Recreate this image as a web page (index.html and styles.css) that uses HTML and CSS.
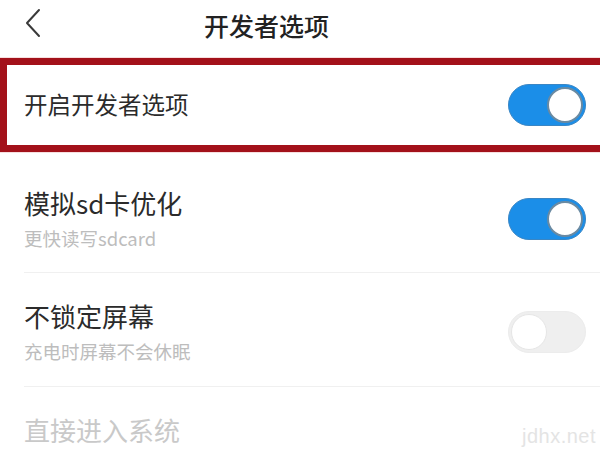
FILE: index.html
```html
<!DOCTYPE html>
<html lang="zh">
<head>
<meta charset="utf-8">
<title>开发者选项</title>
<link rel="stylesheet" href="styles.css">
</head>
<body>
<div class="screen">
  <header class="topbar">
    <svg class="back" width="18" height="30" viewBox="0 0 18 30"><polyline points="15,2 3,15 15,28" fill="none" stroke="#3a3a3a" stroke-width="2" stroke-linecap="round" stroke-linejoin="round"/></svg>
    <h1 class="title">开发者选项</h1>
  </header>

  <div class="highlight">
    <div class="row-main">
      <span class="main-label">开启开发者选项</span>
      <span class="switch on"><span class="knob"></span></span>
    </div>
  </div>

  <div class="item first">
    <div class="texts">
      <div class="label">模拟sd卡优化</div>
      <div class="sub">更快读写sdcard</div>
    </div>
    <span class="switch on"><span class="knob"></span></span>
  </div>

  <div class="item">
    <div class="texts">
      <div class="label">不锁定屏幕</div>
      <div class="sub">充电时屏幕不会休眠</div>
    </div>
    <span class="switch off"><span class="knob"></span></span>
  </div>

  <div class="item last">
    <div class="texts">
      <div class="label disabled">直接进入系统</div>
    </div>
  </div>

  <div class="watermark">jdhx.net</div>
</div>
</body>
</html>
```

FILE: styles.css
```css
html, body {
  margin: 0;
  padding: 0;
  background: #ffffff;
}
body {
  width: 600px;
  height: 450px;
  overflow: hidden;
  font-family: "Noto Sans CJK SC", "Noto Sans", sans-serif;
  color: #2b2b2b;
}
.screen {
  position: relative;
  width: 600px;
  height: 450px;
  overflow: hidden;
}
.topbar {
  height: 50px;
  display: flex;
  align-items: center;
  padding-left: 24px;
}
.back {
  display: block;
  margin-top: -4px;
}
.title {
  margin: 0 0 0 162px;
  font-size: 25px;
  font-weight: 500;
  line-height: 50px;
  color: #222;
}
.highlight {
  margin-top: 8px;
  margin-right: -30px;
  border: 7px solid #a3111a;
  height: 80px;
  box-shadow: 0 0 1px #c44;
}
.row-main {
  height: 80px;
  display: flex;
  align-items: center;
  padding-left: 17px;
  padding-right: 37px;
  justify-content: space-between;
}
.main-label {
  font-size: 23.5px;
  color: #2b2b2b;
  line-height: 30px;
  margin-top: -2px;
}
.switch {
  position: relative;
  display: block;
  width: 78px;
  height: 42px;
  border-radius: 21px;
  box-sizing: border-box;
  flex: none;
}
.switch.on {
  background: #1b8ee8;
  border: 1px solid #3a86c4;
}
.switch.off {
  background: #efefef;
  border: 1px solid #ececec;
}
.switch .knob {
  position: absolute;
  top: 2px;
  width: 36px;
  height: 36px;
  border-radius: 50%;
  background: #fff;
  box-sizing: border-box;
}
.switch.on .knob {
  right: 2px;
  border: 2px solid #6a8aa2;
}
.switch.off .knob {
  left: 2px;
  border: 1px solid #e6e6e6;
}
.item {
  margin-left: 24px;
  padding: 28px 14px 23px 0;
  display: flex;
  align-items: center;
  justify-content: space-between;
  border-bottom: 1px solid #f0f0f0;
}
.item.first {
  padding-top: 36px;
  padding-bottom: 22px;
}
.item.last {
  border-bottom: none;
}
.label {
  font-size: 26px;
  line-height: 30px;
  color: #2b2b2b;
}
.label.disabled {
  color: #c9c9c9;
}
.sub {
  margin-top: 8px;
  font-size: 18.5px;
  line-height: 24px;
  color: #bdbdbd;
}
.watermark {
  position: absolute;
  right: 4px;
  bottom: 2px;
  font-family: "Liberation Sans", Arial, sans-serif;
  font-size: 20px;
  color: #e4e4e4;
  letter-spacing: 0.5px;
}
```
